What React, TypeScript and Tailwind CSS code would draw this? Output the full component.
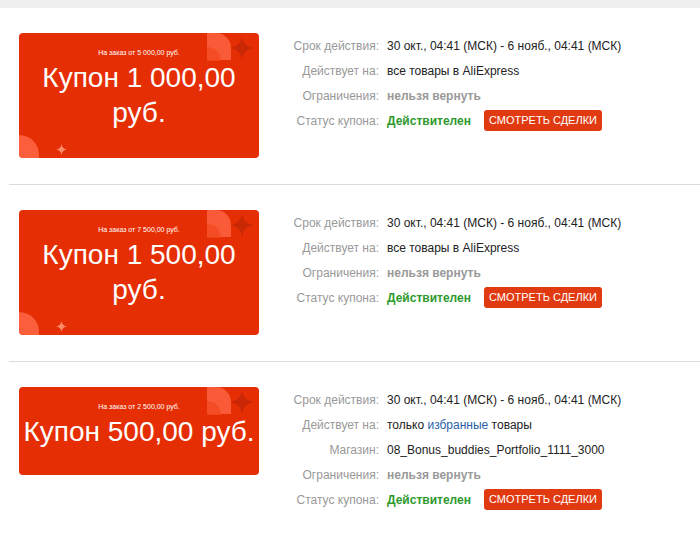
import React from "react";

type Row = { label: string; value: React.ReactNode };

interface Coupon {
  amount: string;
  minOrder: string;
  twoLines: boolean;
  rows: Row[];
}

const period = "30 окт., 04:41 (МСК) - 6 нояб., 04:41 (МСК)";

const restrict = <span className="font-bold text-[#999999]">нельзя вернуть</span>;

const coupons: Coupon[] = [
  {
    amount: "1 000,00",
    minOrder: "На заказ от 5 000,00 руб.",
    twoLines: true,
    rows: [
      { label: "Срок действия:", value: period },
      { label: "Действует на:", value: "все товары в AliExpress" },
      { label: "Ограничения:", value: restrict },
    ],
  },
  {
    amount: "1 500,00",
    minOrder: "На заказ от 7 500,00 руб.",
    twoLines: true,
    rows: [
      { label: "Срок действия:", value: period },
      { label: "Действует на:", value: "все товары в AliExpress" },
      { label: "Ограничения:", value: restrict },
    ],
  },
  {
    amount: "500,00",
    minOrder: "На заказ от 2 500,00 руб.",
    twoLines: false,
    rows: [
      { label: "Срок действия:", value: period },
      {
        label: "Действует на:",
        value: (
          <>
            только <span className="text-[#2a5fa8]">избранные</span> товары
          </>
        ),
      },
      { label: "Магазин:", value: "08_Bonus_buddies_Portfolio_1111_3000" },
      { label: "Ограничения:", value: restrict },
    ],
  },
];

function Star({ size, color }: { size: number; color: string }) {
  return (
    <svg width={size} height={size} viewBox="0 0 20 20">
      <path
        d="M10 0 C10.8 6 14 9.2 20 10 C14 10.8 10.8 14 10 20 C9.2 14 6 10.8 0 10 C6 9.2 9.2 6 10 0 Z"
        fill={color}
      />
    </svg>
  );
}

function CouponCard({ coupon }: { coupon: Coupon }) {
  return (
    <div
      className={`relative w-[240px] shrink-0 overflow-hidden rounded-[4px] bg-[#e62e04] text-center text-white ${
        coupon.twoLines ? "h-[125px]" : "h-[88px]"
      }`}
    >
      {/* top right decoration */}
      <svg className="absolute right-0 top-0" width="52" height="30" viewBox="0 0 52 30">
        <path d="M0 0 H9 A15 15 0 0 1 24 15 V27 H0 Z" fill="#ff6a48" opacity="0.75" />
        <path d="M0 14 A14 14 0 0 1 14 28 H0 Z" fill="#f24a22" opacity="0.8" />
      </svg>
      <div className="absolute right-[5px] top-[3px]">
        <Star size={24} color="#c92806" />
      </div>

      {coupon.twoLines && (
        <>
          <div className="absolute bottom-0 left-0 h-[23px] w-[20px] overflow-hidden">
            <div className="absolute left-[-20px] top-0 h-[44px] w-[40px] rounded-full bg-[#ff6a48] opacity-80" />
          </div>
          <div className="absolute bottom-[3px] left-[37px]">
            <Star size={11} color="#ff8a6a" />
          </div>
        </>
      )}

      <div className="relative pt-[15px]">
        <div className="h-[10px] text-[7px] leading-[10px]">{coupon.minOrder}</div>
        <div className="mt-[2px] px-1 text-[28px] leading-[35px]">
          Купон {coupon.amount} руб.
        </div>
      </div>
    </div>
  );
}

function InfoRow({ label, children }: { label: string; children: React.ReactNode }) {
  return (
    <div className="flex h-[25px] items-center">
      <div className="w-[99px] shrink-0 text-right text-[#999999]">{label}</div>
      <div className="ml-[8px] whitespace-nowrap text-[#222222]">{children}</div>
    </div>
  );
}

export default function App() {
  return (
    <div
      className="min-h-[536px] bg-white text-[12px]"
      style={{ fontFamily: '"Liberation Sans", Arial, sans-serif' }}
    >
      <div className="h-[8px] bg-[#f0f0f0]" />
      <div className="ml-[9px]">
        {coupons.map((c, i) => (
          <div
            key={i}
            className={`flex pb-[26px] pl-[10px] pt-[25px] ${
              i < coupons.length - 1 ? "border-b border-[#dcdcdc]" : ""
            }`}
          >
            <CouponCard coupon={c} />
            <div className="ml-[21px]">
              {c.rows.map((r) => (
                <InfoRow key={r.label} label={r.label}>
                  {r.value}
                </InfoRow>
              ))}
              <InfoRow label="Статус купона:">
                <div className="flex items-center">
                  <span className="font-bold text-[#2e9a2e]">Действителен</span>
                  <button className="ml-[13px] h-[21px] w-[118px] rounded-[3px] bg-[#e23a10] text-[11px] text-white">
                    СМОТРЕТЬ СДЕЛКИ
                  </button>
                </div>
              </InfoRow>
            </div>
          </div>
        ))}
      </div>
    </div>
  );
}
